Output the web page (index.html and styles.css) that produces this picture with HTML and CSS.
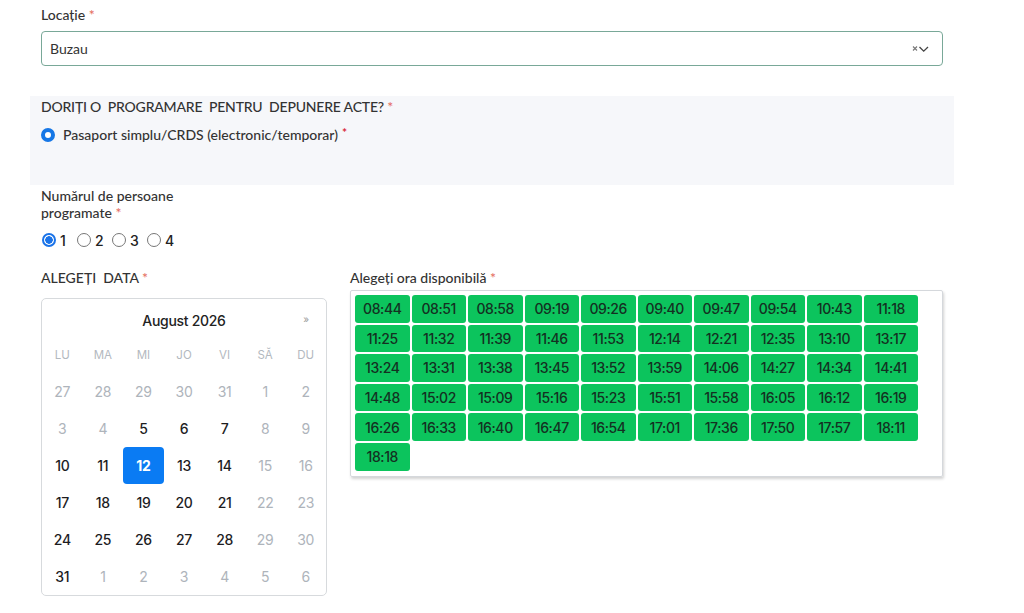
FILE: index.html
```html
<!DOCTYPE html>
<html lang="ro">
<head>
<meta charset="utf-8">
<title>Programare</title>
<link rel="stylesheet" href="styles.css">
</head>
<body>
<div class="page">
  <div class="field">
    <label class="lbl">Locație <span class="req">*</span></label>
    <div class="select">
      <span class="sel-val">Buzau</span>
      <span class="sel-icons">
        <svg width="18" height="10" viewBox="0 0 18 10"><path d="M1 2.5l4 4M5 2.5l-4 4" stroke="#777" stroke-width="1.1" fill="none"/><path d="M7.5 3l4.2 4.2L16 3" stroke="#444" stroke-width="1.3" fill="none"/></svg>
      </span>
    </div>
  </div>

  <div class="panel">
    <div class="panel-title">DORIȚI O&nbsp; PROGRAMARE&nbsp; PENTRU&nbsp; DEPUNERE ACTE? <span class="req">*</span></div>
    <div class="opt"><span class="ring"></span><span>Pasaport simplu/CRDS (electronic/temporar)</span> <span class="req2">*</span></div>
  </div>

  <div class="persons">
    <div class="lbl wrap">Numărul de persoane<br>programate <span class="req">*</span></div>
    <div class="radios">
      <span class="rad on"></span><span class="rnum">1</span>
      <span class="rad"></span><span class="rnum">2</span>
      <span class="rad"></span><span class="rnum">3</span>
      <span class="rad"></span><span class="rnum">4</span>
    </div>
  </div>

  <div class="cols">
    <div class="col-date">
      <div class="lbl upper">ALEGEȚI&nbsp; DATA <span class="req">*</span></div>
      <div class="cal">
        <div class="cal-head"><span class="cal-title">August 2026</span><span class="cal-next">»</span></div>
        <div class="cal-grid">
          <span class="wd">LU</span><span class="wd">MA</span><span class="wd">MI</span><span class="wd">JO</span><span class="wd">VI</span><span class="wd">SĂ</span><span class="wd">DU</span>
          <span class="d m">27</span><span class="d m">28</span><span class="d m">29</span><span class="d m">30</span><span class="d m">31</span><span class="d m">1</span><span class="d m">2</span>
          <span class="d m">3</span><span class="d m">4</span><span class="d">5</span><span class="d">6</span><span class="d">7</span><span class="d m">8</span><span class="d m">9</span>
          <span class="d">10</span><span class="d">11</span><span class="d sel">12</span><span class="d">13</span><span class="d">14</span><span class="d m">15</span><span class="d m">16</span>
          <span class="d">17</span><span class="d">18</span><span class="d">19</span><span class="d">20</span><span class="d">21</span><span class="d m">22</span><span class="d m">23</span>
          <span class="d">24</span><span class="d">25</span><span class="d">26</span><span class="d">27</span><span class="d">28</span><span class="d m">29</span><span class="d m">30</span>
          <span class="d">31</span><span class="d m">1</span><span class="d m">2</span><span class="d m">3</span><span class="d m">4</span><span class="d m">5</span><span class="d m">6</span>
        </div>
      </div>
    </div>
    <div class="col-time">
      <div class="lbl">Alegeți ora disponibilă <span class="req">*</span></div>
      <div class="slots">
        <span class="slot">08:44</span><span class="slot">08:51</span><span class="slot">08:58</span><span class="slot">09:19</span><span class="slot">09:26</span><span class="slot">09:40</span><span class="slot">09:47</span><span class="slot">09:54</span><span class="slot">10:43</span><span class="slot">11:18</span>
        <span class="slot">11:25</span><span class="slot">11:32</span><span class="slot">11:39</span><span class="slot">11:46</span><span class="slot">11:53</span><span class="slot">12:14</span><span class="slot">12:21</span><span class="slot">12:35</span><span class="slot">13:10</span><span class="slot">13:17</span>
        <span class="slot">13:24</span><span class="slot">13:31</span><span class="slot">13:38</span><span class="slot">13:45</span><span class="slot">13:52</span><span class="slot">13:59</span><span class="slot">14:06</span><span class="slot">14:27</span><span class="slot">14:34</span><span class="slot">14:41</span>
        <span class="slot">14:48</span><span class="slot">15:02</span><span class="slot">15:09</span><span class="slot">15:16</span><span class="slot">15:23</span><span class="slot">15:51</span><span class="slot">15:58</span><span class="slot">16:05</span><span class="slot">16:12</span><span class="slot">16:19</span>
        <span class="slot">16:26</span><span class="slot">16:33</span><span class="slot">16:40</span><span class="slot">16:47</span><span class="slot">16:54</span><span class="slot">17:01</span><span class="slot">17:36</span><span class="slot">17:50</span><span class="slot">17:57</span><span class="slot">18:11</span>
        <span class="slot">18:18</span>
      </div>
    </div>
  </div>
</div>
</body>
</html>
```

FILE: styles.css
```css
* { box-sizing: border-box; }
html, body { margin: 0; padding: 0; background: #fff; }
body {
  font-family: Lato, "Noto Sans", sans-serif;
  font-size: 14px;
  color: #2b2b2b;
}
.page {
  width: 943px;
  padding: 5px 0 0 41px;
}
.lbl {
  display: block;
  font-size: 14px;
  line-height: 20px;
  font-weight: 500;
  color: #333;
}
.req { color: #e46a5c; }
.select {
  margin-top: 6px;
  height: 35px;
  border: 1px solid #79a898;
  border-radius: 4px;
  display: flex;
  align-items: center;
  justify-content: space-between;
  padding: 0 12px 0 8px;
}
.sel-val { font-size: 14px; color: #333; }
.sel-icons { display: flex; align-items: center; }

.panel {
  margin: 30px 0 0 -11px;
  width: 924px;
  height: 89px;
  background: #f6f7fa;
  padding: 1px 11px 0;
}
.panel-title { line-height: 20px; font-size: 14px; color: #333; font-weight: 500; letter-spacing: -0.2px; }
.opt {
  margin-top: 8px;
  display: flex;
  align-items: center;
  line-height: 20px;
  color: #333;
  font-weight: 500;
}
.ring {
  width: 14px; height: 14px;
  border-radius: 50%;
  border: 4px solid #1677e6;
  background: #fff;
  margin-right: 8px;
}
.req2 { color: #d9283a; font-weight: 700; font-size: 12px; align-self: flex-start; margin-left: 4px; line-height: 16px; }

.persons { margin-top: 2px; }
.wrap { width: 170px; line-height: 17px; }
.radios {
  margin-top: 9px;
  height: 20px;
  display: flex;
  align-items: center;
  font-family: Inter, sans-serif;
  font-size: 14px;
  font-weight: 500;
  color: #222;
}
.rad {
  width: 14px; height: 14px;
  border-radius: 50%;
  border: 1px solid #777;
  background: #fff;
  margin: 0 4px 0 1px;
}
.rad.on {
  border: 2px solid #1a73e8;
  background: radial-gradient(circle, #1a73e8 0 3.5px, #fff 4px);
}
.rnum { margin-right: 8px; width: 8px; }

.cols {
  margin-top: 18px;
  display: flex;
  gap: 23px;
}
.col-date { width: 286px; }
.col-time { width: 593px; }
.cal {
  margin-top: 10px;
  border: 1px solid #d7dadd;
  border-radius: 5px;
  font-family: Inter, sans-serif;
  height: 298px;
}
.cal-head {
  height: 41px;
  display: flex;
  align-items: center;
  justify-content: center;
  position: relative;
  padding-top: 1px;
}
.cal-title { font-size: 14px; font-weight: 500; color: #222; letter-spacing: -0.3px; }
.cal-next {
  position: absolute;
  right: 17px;
  top: 14px;
  font-size: 10px;
  color: #999;
}
.cal-grid {
  display: grid;
  grid-template-columns: repeat(7, 1fr);
  grid-auto-rows: 37px;
  margin-top: -4px;
}
.cal-grid span {
  display: flex;
  align-items: center;
  justify-content: center;
}
.wd { font-size: 11.5px; color: #b3b9c0; font-weight: 400; }
.d { font-size: 14px; font-weight: 500; color: #1d1d1f; letter-spacing: -0.3px; }
.d.m { color: #aeb4bb; font-weight: 400; }
.d.sel {
  background: #0a7bf3;
  color: #fff;
  font-weight: 700;
  border-radius: 4px;
}

.slots {
  margin-top: 2px;
  border: 1px solid #d5d8dc;
  border-radius: 2px;
  box-shadow: 1px 2px 3px rgba(0,0,0,0.18);
  height: 187px;
  padding: 4px;
  display: flex;
  flex-wrap: wrap;
  align-content: flex-start;
  gap: 2px 2px;
}
.slot {
  width: 54.5px;
  height: 27.6px;
  background: #0cc45d;
  border-radius: 3px;
  display: flex;
  align-items: center;
  justify-content: center;
  font-family: Inter, sans-serif;
  font-size: 14px;
  font-weight: 500;
  color: #143022;
  letter-spacing: -0.4px;
}
```
